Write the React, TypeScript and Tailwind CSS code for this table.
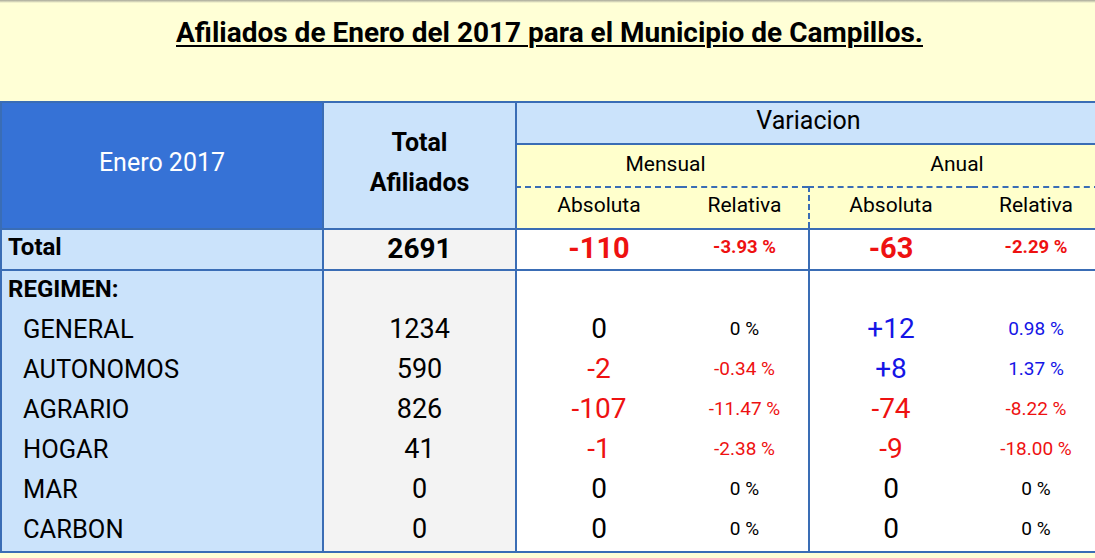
import React from "react";

type V = { t: string; c: "k" | "r" | "b" };

const rows: { label: string; total: string; ma: V; mr: V; aa: V; ar: V }[] = [
  { label: "GENERAL", total: "1234", ma: { t: "0", c: "k" }, mr: { t: "0 %", c: "k" }, aa: { t: "+12", c: "b" }, ar: { t: "0.98 %", c: "b" } },
  { label: "AUTONOMOS", total: "590", ma: { t: "-2", c: "r" }, mr: { t: "-0.34 %", c: "r" }, aa: { t: "+8", c: "b" }, ar: { t: "1.37 %", c: "b" } },
  { label: "AGRARIO", total: "826", ma: { t: "-107", c: "r" }, mr: { t: "-11.47 %", c: "r" }, aa: { t: "-74", c: "r" }, ar: { t: "-8.22 %", c: "r" } },
  { label: "HOGAR", total: "41", ma: { t: "-1", c: "r" }, mr: { t: "-2.38 %", c: "r" }, aa: { t: "-9", c: "r" }, ar: { t: "-18.00 %", c: "r" } },
  { label: "MAR", total: "0", ma: { t: "0", c: "k" }, mr: { t: "0 %", c: "k" }, aa: { t: "0", c: "k" }, ar: { t: "0 %", c: "k" } },
  { label: "CARBON", total: "0", ma: { t: "0", c: "k" }, mr: { t: "0 %", c: "k" }, aa: { t: "0", c: "k" }, ar: { t: "0 %", c: "k" } },
];

const colorCls = (c: V["c"]) =>
  c === "r" ? "text-[#ee1111]" : c === "b" ? "text-[#1515e6]" : "text-black";

function Col({
  cls,
  items,
  size,
}: {
  cls: string;
  items: V[];
  size: string;
}) {
  return (
    <div className={cls}>
      <div className="h-[38px]" />
      {items.map((v, i) => (
        <div key={i} className={`flex h-[40px] items-center justify-center ${size} ${colorCls(v.c)}`}>
          {v.t}
        </div>
      ))}
    </div>
  );
}

export default function App() {
  return (
    <div className="relative h-[558px] w-[1095px] overflow-hidden bg-[#ffffd6] font-['Roboto','Liberation_Sans',sans-serif] text-black">
      <div className="h-[3px] bg-linear-to-b from-[#a8a89a] to-[#ffffd6]" />
      <div className="flex h-[98px] justify-center pt-[13px] pl-[4px]">
        <h1 className="text-[28px] font-bold leading-[34px] underline decoration-2 underline-offset-[3px]">
          Afiliados de Enero del 2017 para el Municipio de Campillos.
        </h1>
      </div>

      <div className="grid w-[1100px] grid-cols-[322px_193px_166px_127px_164px_128px] grid-rows-[42px_43px_42px_41px_284px]">
        {/* Header */}
        <div className="row-span-3 flex items-center justify-center border-t-2 border-l-2 border-[#3a6db5] bg-[#3672d6] pb-[6px] text-[25px] text-white">
          Enero 2017
        </div>
        <div className="row-span-3 flex flex-col items-center justify-center border-t-2 border-l-2 border-[#3a6db5] bg-[#cbe3fb] pb-[6px] text-[25px] font-bold leading-[40px]">
          <span>Total</span>
          <span>Afiliados</span>
        </div>
        <div className="col-span-4 flex items-center justify-center border-t-2 border-l-2 border-[#3a6db5] bg-[#cbe3fb] pb-[4px] text-[25px]">
          Variacion
        </div>
        <div className="col-span-2 flex items-center justify-center border-t-2 border-l-2 border-[#3a6db5] bg-[#ffffcc] pb-[2px] pl-[6px] text-[21px]">
          Mensual
        </div>
        <div className="col-span-2 flex items-center justify-center border-t-2 border-[#3a6db5] bg-[#ffffcc] pb-[2px] pl-[6px] text-[21px]">
          Anual
        </div>
        <div className="flex items-center justify-center border-t-2 border-l-2 border-[#3a6db5] bg-[#ffffcc] pb-[5px] text-[21px] [border-top-style:dashed]">
          Absoluta
        </div>
        <div className="flex items-center justify-center border-t-2 border-dashed border-[#3a6db5] bg-[#ffffcc] pb-[5px] text-[21px]">
          Relativa
        </div>
        <div className="flex items-center justify-center border-t-2 border-l-2 border-dashed border-[#3a6db5] bg-[#ffffcc] pb-[5px] text-[21px]">
          Absoluta
        </div>
        <div className="flex items-center justify-center border-t-2 border-dashed border-[#3a6db5] bg-[#ffffcc] pb-[5px] text-[21px]">
          Relativa
        </div>

        {/* Total row */}
        <div className="flex items-center border-t-2 border-l-2 border-[#3a6db5] bg-[#cbe3fb] pb-[6px] pl-[6px] text-[24px] font-bold">
          Total
        </div>
        <div className="flex items-center justify-center border-t-2 border-l-2 border-[#3a6db5] bg-[#f3f3f3] pb-[2px] text-[28px] font-bold">
          2691
        </div>
        <div className="flex items-center justify-center border-t-2 border-l-2 border-[#3a6db5] bg-white pb-[2px] text-[29px] font-bold text-[#ee1111]">
          -110
        </div>
        <div className="flex items-center justify-center border-t-2 border-[#3a6db5] bg-white pb-[4px] text-[18.5px] font-bold text-[#ee1111]">
          -3.93 %
        </div>
        <div className="flex items-center justify-center border-t-2 border-l-2 border-[#3a6db5] bg-white pb-[2px] text-[29px] font-bold text-[#ee1111]">
          -63
        </div>
        <div className="flex items-center justify-center border-t-2 border-[#3a6db5] bg-white pb-[4px] text-[18.5px] font-bold text-[#ee1111]">
          -2.29 %
        </div>

        {/* Body */}
        <div className="border-t-2 border-b-2 border-l-2 border-[#3a6db5] bg-[#cbe3fb]">
          <div className="flex h-[38px] items-center pb-[2px] pl-[6px] text-[24px] font-bold">REGIMEN:</div>
          {rows.map((r) => (
            <div key={r.label} className="flex h-[40px] items-center pl-[21px] text-[25.5px]">
              {r.label}
            </div>
          ))}
        </div>
        <Col
          cls="border-t-2 border-b-2 border-l-2 border-[#3a6db5] bg-[#f3f3f3]"
          size="text-[27px]"
          items={rows.map((r) => ({ t: r.total, c: "k" as const }))}
        />
        <Col cls="border-t-2 border-b-2 border-l-2 border-[#3a6db5] bg-white" size="text-[28px]" items={rows.map((r) => r.ma)} />
        <Col cls="border-t-2 border-b-2 border-[#3a6db5] bg-white" size="text-[19px]" items={rows.map((r) => r.mr)} />
        <Col cls="border-t-2 border-b-2 border-l-2 border-[#3a6db5] bg-white" size="text-[28px]" items={rows.map((r) => r.aa)} />
        <Col cls="border-t-2 border-b-2 border-[#3a6db5] bg-white" size="text-[19px]" items={rows.map((r) => r.ar)} />
      </div>
    </div>
  );
}
